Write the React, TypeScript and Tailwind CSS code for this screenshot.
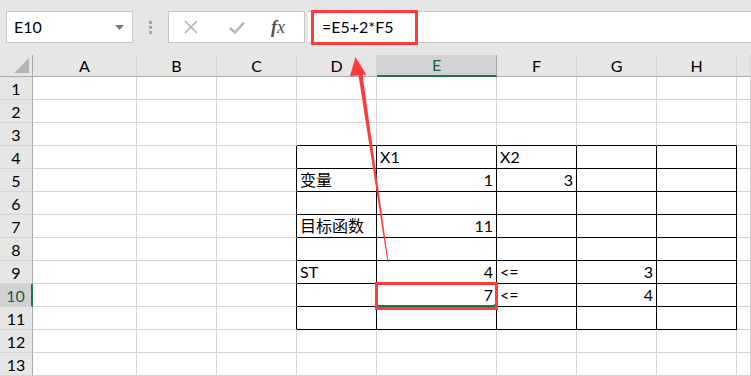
import React from 'react';

const cols = ['A', 'B', 'C', 'D', 'E', 'F', 'G', 'H', ''];
const rows = Array.from({ length: 13 }, (_, i) => i + 1);

// cell contents keyed by "row-col"
const cells: Record<string, { text: string; right?: boolean }> = {
  '4-E': { text: 'X1' },
  '4-F': { text: 'X2' },
  '5-D': { text: '变量' },
  '5-E': { text: '1', right: true },
  '5-F': { text: '3', right: true },
  '7-D': { text: '目标函数' },
  '7-E': { text: '11', right: true },
  '9-D': { text: 'ST' },
  '9-E': { text: '4', right: true },
  '9-F': { text: '<=' },
  '9-G': { text: '3', right: true },
  '10-E': { text: '7', right: true },
  '10-F': { text: '<=' },
  '10-G': { text: '4', right: true },
};

const tableCols = ['D', 'E', 'F', 'G', 'H'];

function Cell({ r, c }: { r: number; c: string }) {
  const content = cells[`${r}-${c}`];
  const blackRight = r >= 4 && r <= 11 && ['C', ...tableCols].includes(c);
  const blackBottom = r >= 3 && r <= 11 && tableCols.includes(c);
  const selected = r === 10 && c === 'E';
  return (
    <div
      className={`relative flex items-end overflow-visible whitespace-nowrap bg-white px-[3px] pb-[1px] text-[16px] leading-[20px] text-black ${
        blackRight ? 'border-r border-r-black' : 'border-r border-r-[#d4d4d4]'
      } ${blackBottom ? 'border-b border-b-black' : 'border-b border-b-[#d4d4d4]'} ${
        content?.right ? 'justify-end' : 'justify-start'
      }`}
    >
      {content?.text}
      {selected && (
        <>
          <div className="absolute bottom-[-1px] left-0 right-0 h-[2px] bg-[#217346]" />
          <div className="absolute bottom-[-3px] right-[-3px] h-[5px] w-[5px] bg-[#217346]" />
        </>
      )}
    </div>
  );
}

export default function App() {
  return (
    <div
      className="relative h-[376px] w-[751px] overflow-hidden bg-[#e6e6e6]"
      style={{ fontFamily: 'Lato, "Noto Sans CJK SC", sans-serif' }}
    >
      {/* Formula bar */}
      <div className="flex h-[55px] items-start pt-[11px]">
        <div className="ml-[6px] flex h-[32px] w-[127px] items-center justify-between border border-[#c6c6c6] bg-white pl-[7px] pr-[8px] text-[16px] text-black">
          <span>E10</span>
          <svg width="9" height="5" viewBox="0 0 9 5">
            <path d="M0 0 L9 0 L4.5 5 Z" fill="#777" />
          </svg>
        </div>
        <div className="ml-[16px] flex h-[32px] flex-col justify-center gap-[2px]">
          <div className="h-[3px] w-[3px] bg-[#a6a6a6]" />
          <div className="h-[3px] w-[3px] bg-[#a6a6a6]" />
          <div className="h-[3px] w-[3px] bg-[#a6a6a6]" />
        </div>
        <div className="ml-[16px] flex h-[32px] w-[137px] items-center border border-[#c6c6c6] bg-white">
          <svg className="ml-[15px]" width="14" height="14" viewBox="0 0 14 14">
            <path d="M1 1 L13 13 M13 1 L1 13" stroke="#b4b4b4" strokeWidth="1.6" />
          </svg>
          <svg className="ml-[31px]" width="16" height="13" viewBox="0 0 16 13">
            <path d="M1 7 L6 11.5 L15 1.5" stroke="#b4b4b4" strokeWidth="2.4" fill="none" />
          </svg>
          <span
            className="ml-[26px] text-[18px] italic text-[#505050]"
            style={{ fontFamily: '"Liberation Serif", serif' }}
          >
            <b>f</b>x
          </span>
        </div>
        <div className="ml-[3px] flex h-[32px] flex-1 items-center border-y border-[#c6c6c6] bg-white pl-[14px] text-[16px] text-black">
          =E5+2*F5
        </div>
      </div>

      {/* Sheet grid */}
      <div className="grid grid-cols-[33px_104px_80px_80px_80px_120px_80px_80px_80px_14px] grid-rows-[22px_repeat(13,23px)]">
        <div className="relative border-b border-r border-[#ababab] bg-[#e6e6e6]">
          <svg className="absolute bottom-[3px] right-[3px]" width="15" height="15" viewBox="0 0 15 15">
            <path d="M15 0 L15 15 L0 15 Z" fill="#b4b4b4" />
          </svg>
        </div>
        {cols.map((c) => (
          <div
            key={c || 'I'}
            className={`flex items-end justify-center border-r text-[16px] leading-[20px] ${
              c === 'E'
                ? 'border-b-2 border-b-[#217346] border-r-[#ababab] bg-[#d2d2d2] text-[#1e5e3a]'
                : 'border-b border-b-[#ababab] border-r-[#d4d4d4] bg-[#e6e6e6] text-black'
            }`}
          >
            {c}
          </div>
        ))}
        {rows.map((r) => (
          <React.Fragment key={r}>
            <div
              className={`flex items-end justify-center border-b border-b-[#d4d4d4] text-[16px] leading-[21px] ${
                r === 10
                  ? 'border-r-2 border-r-[#217346] bg-[#d2d2d2] text-[#1e5e3a]'
                  : 'border-r border-r-[#ababab] bg-[#e6e6e6] text-black'
              }`}
            >
              {r}
            </div>
            {cols.map((c) => (
              <Cell key={c || 'I'} r={r} c={c || 'I'} />
            ))}
          </React.Fragment>
        ))}
      </div>

      {/* Annotations */}
      <div className="absolute left-[311px] top-[10px] h-[35px] w-[107px] border-[3px] border-[#ff3b3b]" />
      <div className="absolute left-[375px] top-[282px] h-[28px] w-[123px] border-[3px] border-[#ff3b3b]" />
      <svg className="pointer-events-none absolute left-0 top-0" width="751" height="376">
        <path d="M355.5 57 L366.5 75 L362.5 74.5 L388.5 262 L387.5 262 L358.5 75.5 L350 76 Z" fill="#ff3b3b" />
      </svg>
    </div>
  );
}
